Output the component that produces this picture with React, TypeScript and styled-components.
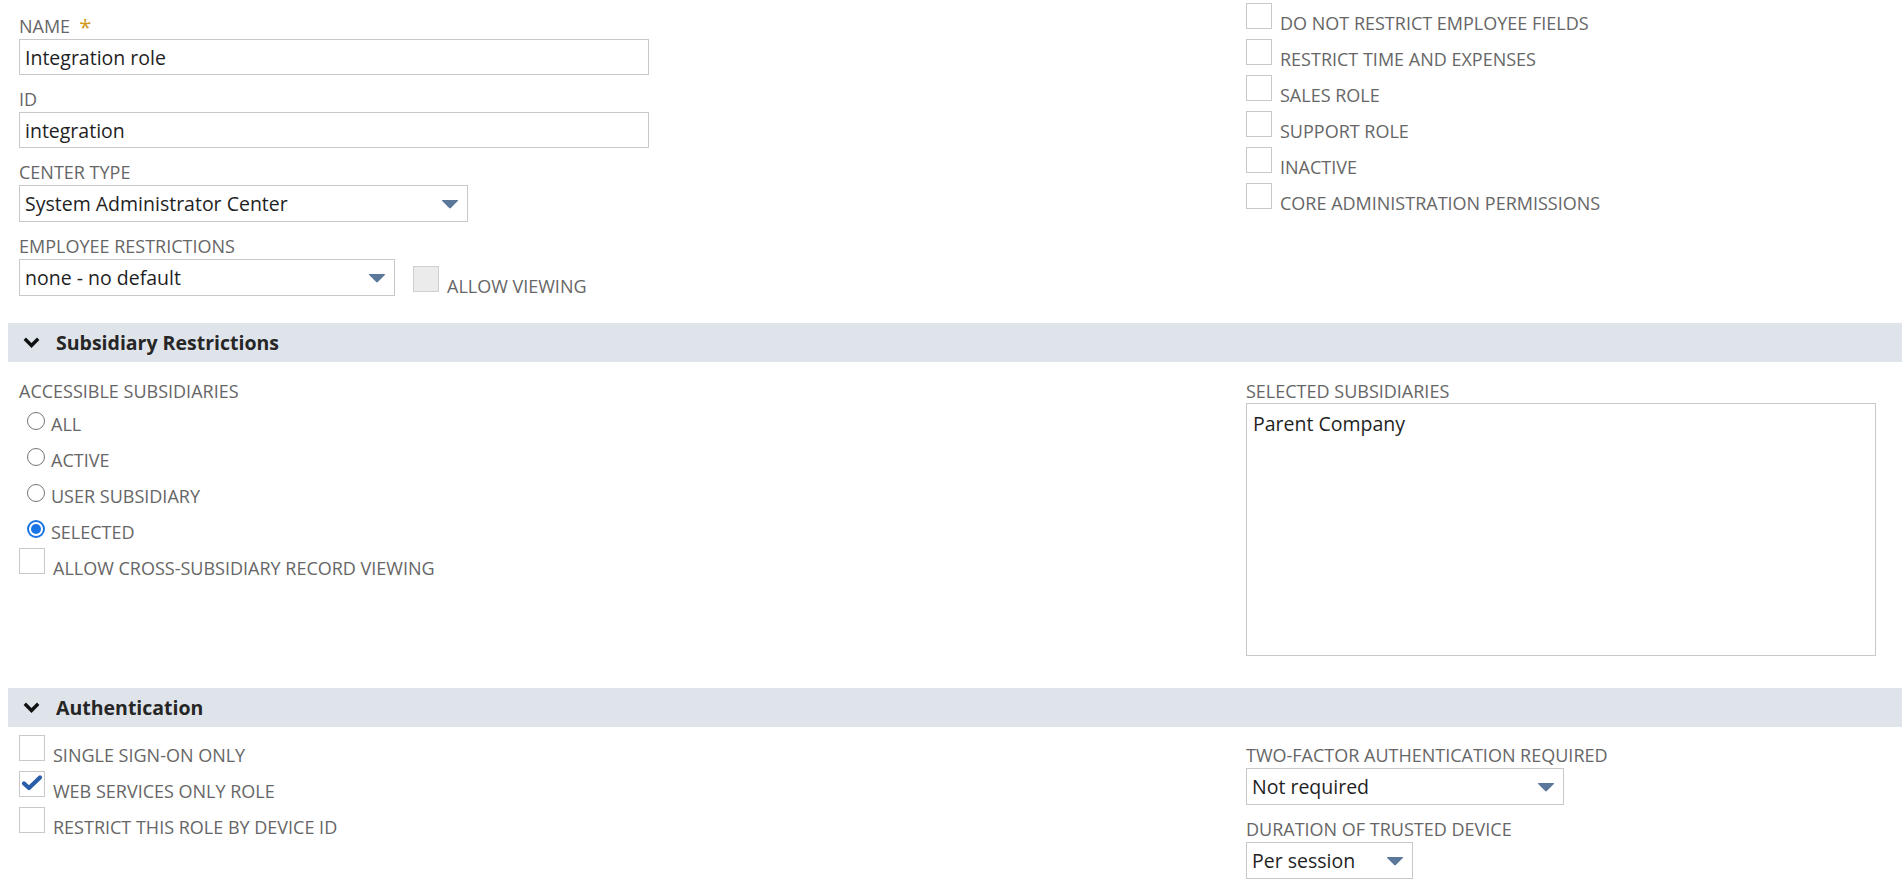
import styled, { createGlobalStyle } from "styled-components";

const GlobalStyle = createGlobalStyle`
  html, body {
    margin: 0;
    padding: 0;
    background: #fff;
    overflow: hidden;
  }
  body {
    font-family: "Open Sans", "Liberation Sans", sans-serif;
    color: #222;
  }
`;

const Page = styled.div`
  padding-left: 8px;
`;

const TopGrid = styled.div`
  display: grid;
  grid-template-columns: 1227px 1fr;
  padding-left: 11px;
  padding-bottom: 24px;
`;

const Column = styled.div<{ $top?: number }>`
  display: flex;
  flex-direction: column;
  padding-top: ${p => p.$top ?? 0}px;
`;

const FieldGroup = styled.div<{ $last?: boolean }>`
  display: flex;
  flex-direction: column;
  align-items: flex-start;
  margin-bottom: ${p => (p.$last ? 0 : 13)}px;
`;

const FieldLabel = styled.div<{ $after?: number }>`
  font-size: 18px;
  line-height: 22px;
  height: 22px;
  color: #666;
  text-transform: uppercase;
  margin-bottom: ${p => p.$after ?? 2}px;
  display: flex;
  align-items: flex-start;
`;

const Required = styled.span`
  color: #d09a1c;
  font-size: 22px;
  line-height: 22px;
  margin-left: 9px;
`;

const TextInput = styled.input`
  box-sizing: border-box;
  width: 630px;
  height: 36px;
  border: 1px solid #c8c8c8;
  padding: 0 5px;
  font-family: "Open Sans", "Liberation Sans", sans-serif;
  font-size: 19.5px;
  color: #1f1f1f;
  background: #fff;
  outline: none;
`;

const SelectBox = styled.div<{ $width: number }>`
  box-sizing: border-box;
  width: ${p => p.$width}px;
  height: 37px;
  border: 1px solid #c8c8c8;
  padding: 0 8px 0 5px;
  display: flex;
  align-items: center;
  justify-content: space-between;
  font-size: 19.5px;
  color: #1f1f1f;
  background: #fff;
`;

const SelectRow = styled.div`
  display: flex;
  align-items: flex-start;
  gap: 18px;
`;

const CheckRow = styled.div<{ $offset?: number }>`
  display: flex;
  align-items: flex-start;
  height: 36px;
  margin-top: ${p => p.$offset ?? 0}px;
`;

const Box = styled.span<{ $disabled?: boolean }>`
  box-sizing: border-box;
  width: 26px;
  height: 26px;
  margin-top: 3px;
  flex: none;
  border: 1px solid ${p => (p.$disabled ? "#cfcfcf" : "#c8c8c8")};
  background: ${p => (p.$disabled ? "#ebebeb" : "#fff")};
  display: flex;
  align-items: center;
  justify-content: center;
`;

const RadioDot = styled.span<{ $checked?: boolean }>`
  box-sizing: border-box;
  width: 18px;
  height: 18px;
  margin: 11px 0 0 8px;
  flex: none;
  border-radius: 50%;
  border: ${p => (p.$checked ? "2px solid #1b74e4" : "1px solid #767676")};
  background: #fff;
  display: flex;
  align-items: center;
  justify-content: center;
  &::after {
    content: "";
    display: ${p => (p.$checked ? "block" : "none")};
    width: 10px;
    height: 10px;
    border-radius: 50%;
    background: #1b74e4;
  }
`;

const OptionText = styled.span<{ $gap?: number }>`
  font-size: 18px;
  line-height: 22px;
  padding-top: 12px;
  margin-left: ${p => p.$gap ?? 8}px;
  color: #666;
  text-transform: uppercase;
  white-space: nowrap;
`;

const SectionHeader = styled.div`
  height: 39px;
  background: #dfe4eb;
  display: flex;
  align-items: center;
  padding-left: 15px;
  gap: 16px;
  font-weight: 700;
  font-size: 19.5px;
  color: #262626;
`;

const SectionBody = styled.div<{ $top: number; $bottom: number }>`
  display: grid;
  grid-template-columns: 1227px 1fr;
  padding: ${p => p.$top}px 0 ${p => p.$bottom}px 11px;
`;

const ListBox = styled.div`
  box-sizing: border-box;
  width: 630px;
  height: 253px;
  margin-top: -1px;
  border: 1px solid #c8c8c8;
  padding: 7px 6px;
  font-size: 19.5px;
  line-height: 26px;
  color: #1f1f1f;
`;

const Arrow = () => (
  <svg width="18" height="10" viewBox="0 0 18 10">
    <path d="M1.5 1 L16.5 1 Q17.5 1 16.8 1.9 L9.8 9 Q9 9.8 8.2 9 L1.2 1.9 Q0.5 1 1.5 1 Z" fill="#5b7799" />
  </svg>
);

const Chevron = () => (
  <svg width="17" height="11" viewBox="0 0 17 11">
    <path d="M1.8 1.8 L8.5 8.5 L15.2 1.8" fill="none" stroke="#111" strokeWidth="3.4" strokeLinejoin="miter" />
  </svg>
);

const Tick = () => (
  <svg width="24" height="24" viewBox="0 0 24 24">
    <path d="M4 11.5 L9 16 L20 5.5" fill="none" stroke="#2a5ca8" strokeWidth="4.2" strokeLinecap="round" strokeLinejoin="round" />
  </svg>
);

const Check = (props: { label: string; checked?: boolean; disabled?: boolean; offset?: number }) => (
  <CheckRow $offset={props.offset}>
    <Box $disabled={props.disabled}>{props.checked && <Tick />}</Box>
    <OptionText>{props.label}</OptionText>
  </CheckRow>
);

const Radio = (props: { label: string; checked?: boolean }) => (
  <CheckRow>
    <RadioDot $checked={props.checked} />
    <OptionText $gap={6}>{props.label}</OptionText>
  </CheckRow>
);

const Select = (props: { value: string; width: number }) => (
  <SelectBox $width={props.width}>
    <span>{props.value}</span>
    <Arrow />
  </SelectBox>
);

export default function App() {
  return (
    <Page>
      <GlobalStyle />
      <TopGrid>
        <Column $top={15}>
          <FieldGroup>
            <FieldLabel>Name<Required>*</Required></FieldLabel>
            <TextInput defaultValue="Integration role" />
          </FieldGroup>
          <FieldGroup>
            <FieldLabel>ID</FieldLabel>
            <TextInput defaultValue="integration" />
          </FieldGroup>
          <FieldGroup>
            <FieldLabel>Center Type</FieldLabel>
            <Select value="System Administrator Center" width={449} />
          </FieldGroup>
          <FieldGroup $last>
            <FieldLabel>Employee Restrictions</FieldLabel>
            <SelectRow>
              <Select value="none - no default" width={376} />
              <Check label="Allow Viewing" disabled offset={4} />
            </SelectRow>
          </FieldGroup>
        </Column>
        <Column>
          <Check label="Do not restrict employee fields" />
          <Check label="Restrict time and expenses" />
          <Check label="Sales role" />
          <Check label="Support role" />
          <Check label="Inactive" />
          <Check label="Core administration permissions" />
        </Column>
      </TopGrid>

      <SectionHeader>
        <Chevron />
        Subsidiary Restrictions
      </SectionHeader>
      <SectionBody $top={18} $bottom={32}>
        <Column>
          <FieldLabel $after={-1}>Accessible Subsidiaries</FieldLabel>
          <Radio label="All" />
          <Radio label="Active" />
          <Radio label="User subsidiary" />
          <Radio label="Selected" checked />
          <Check label="Allow cross-subsidiary record viewing" />
        </Column>
        <Column>
          <FieldLabel>Selected Subsidiaries</FieldLabel>
          <ListBox>Parent Company</ListBox>
        </Column>
      </SectionBody>

      <SectionHeader>
        <Chevron />
        Authentication
      </SectionHeader>
      <SectionBody $top={5} $bottom={0}>
        <Column>
          <Check label="Single sign-on only" />
          <Check label="Web services only role" checked />
          <Check label="Restrict this role by device ID" />
        </Column>
        <Column $top={12}>
          <FieldGroup>
            <FieldLabel>Two-factor authentication required</FieldLabel>
            <Select value="Not required" width={318} />
          </FieldGroup>
          <FieldGroup $last>
            <FieldLabel>Duration of trusted device</FieldLabel>
            <Select value="Per session" width={167} />
          </FieldGroup>
        </Column>
      </SectionBody>
    </Page>
  );
}
